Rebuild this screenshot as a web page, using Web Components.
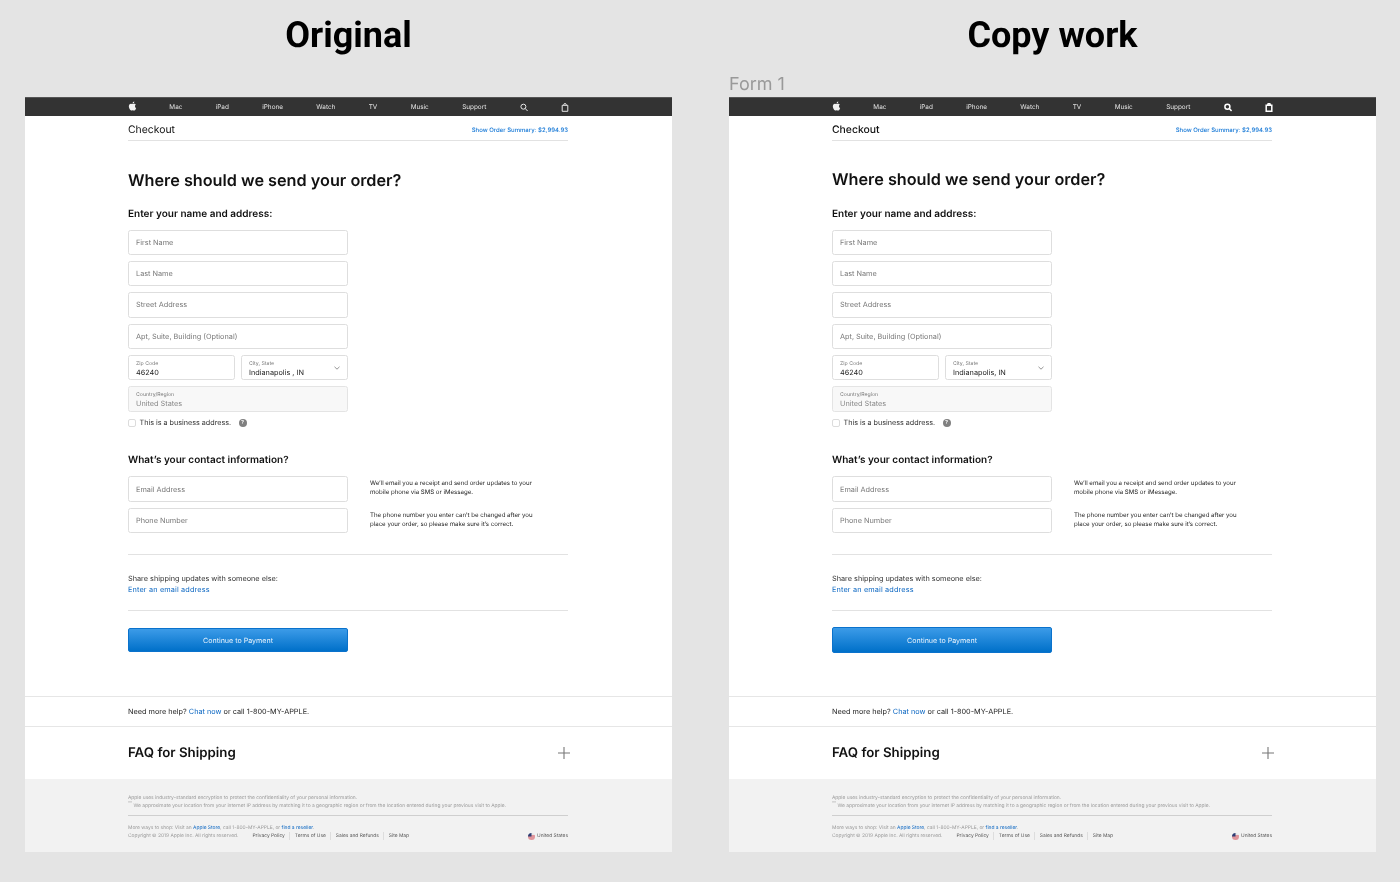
<!DOCTYPE html>
<html lang="en">
<head>
<meta charset="utf-8">
<title>Checkout comparison</title>
<style>
  html, body { margin: 0; height: 882px; overflow: hidden; background: #e4e4e4; }
  body { display: flex; gap: 57px; padding-left: 25px; font-family: Inter, "Liberation Sans", sans-serif; text-rendering: geometricPrecision; }
</style>
</head>
<body>

<frame-column heading="Original">
  <checkout-frame city="Indianapolis , IN"></checkout-frame>
</frame-column>

<frame-column heading="Copy work" label="Form 1">
  <checkout-frame city="Indianapolis, IN" copy></checkout-frame>
</frame-column>

<template id="frame-tpl">
  <style>
    :host { display: flex; flex-direction: column; width: 647px; height: 755px; background: #fff; color: #111; filter: blur(.25px); }
    .main { padding: 0 104px 0 103px; display: flex; flex-direction: column; }
    .top { padding-top: 1px; box-sizing: border-box; border-bottom: 1px solid #e2e2e2; height: 25px;
      display: flex; justify-content: space-between; align-items: center; }
    .checkout { font-size: 10.4px; padding-top: 1px; }
    :host([copy]) .checkout { font-weight: 500; }
    .summary { font-size: 6px; color: #1477d6; font-weight: 500; padding-top: 4px; }
    h1 { font-size: 16.24px; line-height: 28px; font-weight: 600; margin: 25px 0 0; }
    :host([copy]) h1 { margin-top: 24px; margin-bottom: 1px; }
    h2 { font-size: 10px; line-height: 15px; font-weight: 600; margin: 13px 0 0; }
    h2.contact { margin-top: 25px; }
    .fields { display: grid; grid-template-columns: 107px 107px; gap: 6px; width: 220px; margin-top: 7.5px; }
    .fields text-field.wide { grid-column: span 2; }
    .biz { display: flex; align-items: center; height: 10px; margin-top: 6px; font-size: 7.2px; color: #333; }
    .box { width: 8px; height: 8px; border: 1px solid #dcdcdc; border-radius: 2px; box-sizing: border-box; margin-right: 3.5px; background: #fff; }
    .tip { width: 8px; height: 8px; border-radius: 50%; background: #808080; color: #fff; font-size: 5.5px; font-weight: 700;
      display: flex; align-items: center; justify-content: center; margin-left: 7.5px; }
    .contact-grid { display: grid; grid-template-columns: 220px 1fr; column-gap: 22px; row-gap: 6px; margin-top: 8.5px; }
    .note { font-size: 6.1px; line-height: 9px; color: #222; padding-top: 3px; }
    .rule { height: 1px; background: #e2e2e2; }
    .share { font-size: 7.3px; line-height: 11px; color: #333; margin-top: 18px; }
    a { color: #0a66c2; text-decoration: none; }
    .share a { display: block; letter-spacing: .15px; }
    .pay { height: 24px; width: 220px; margin-top: 17px; border-radius: 2px; border: 1px solid #0a72cc; box-sizing: border-box;
      background: linear-gradient(#3c9be8, #0070c9); color: #e8f3fd; font-size: 7.1px; display: flex; align-items: center; justify-content: center; }
    :host([copy]) .pay { height: 26px; margin-top: 16px; }
    .help { margin-top: 44px; height: 31px; border-top: 1px solid #e6e6e6; border-bottom: 1px solid #e6e6e6; box-sizing: border-box;
      padding-left: 103px; display: flex; align-items: center; font-size: 7.3px; color: #222; }
    :host([copy]) .help { margin-top: 43px; }
    .faq { height: 52px; box-sizing: border-box; padding: 0 103px 1px; display: flex; align-items: center; justify-content: space-between; font-size: 13.3px; font-weight: 600; }
    .faq svg { width: 12px; height: 12px; margin-right: -1px; }
  </style>
  <site-nav></site-nav>
  <div class="main">
    <div class="top"><span class="checkout">Checkout</span><a class="summary">Show Order Summary: $2,994.93</a></div>
    <h1>Where should we send your order?</h1>
    <h2>Enter your name and address:</h2>
    <div class="fields">
      <text-field class="wide">First Name</text-field>
      <text-field class="wide">Last Name</text-field>
      <text-field class="wide">Street Address</text-field>
      <text-field class="wide">Apt, Suite, Building (Optional)</text-field>
      <text-field label="Zip Code" filled>46240</text-field>
      <text-field label="City, State" filled select id="city"></text-field>
      <text-field class="wide" label="Country/Region" disabled>United States</text-field>
    </div>
    <div class="biz"><span class="box"></span>This is a business address.<span class="tip">?</span></div>
    <h2 class="contact">What’s your contact information?</h2>
    <div class="contact-grid">
      <text-field>Email Address</text-field>
      <div class="note">We’ll email you a receipt and send order updates to your<br>mobile phone via SMS or iMessage.</div>
      <text-field>Phone Number</text-field>
      <div class="note">The phone number you enter can’t be changed after you<br>place your order, so please make sure it’s correct.</div>
    </div>
    <div class="rule" style="margin-top:21px"></div>
    <div class="share">Share shipping updates with someone else:<a>Enter an email address</a></div>
    <div class="rule" style="margin-top:15px"></div>
    <div class="pay">Continue to Payment</div>
  </div>
  <div class="help"><span>Need more help? <a>Chat now</a> or call 1-800-MY-APPLE.</span></div>
  <div class="faq"><span>FAQ for Shipping</span>
    <svg viewBox="0 0 12 12"><path d="M6 0v12M0 6h12" stroke="#777" stroke-width="1.1" fill="none"/></svg>
  </div>
  <site-footer></site-footer>
</template>

<script>
  class FrameColumn extends HTMLElement {
    constructor() {
      super()
      const shadow = this.attachShadow({ mode: 'open' })
      shadow.innerHTML = `
      <style>
        :host { display: flex; flex-direction: column; width: 647px; padding-top: 13px; }
        h3 { margin: 0; height: 44px; font: 700 36px/44px Roboto, sans-serif; color: #000; text-align: center; filter: blur(.2px); }
        .label { height: 40px; display: flex; align-items: flex-end; box-sizing: border-box; padding-bottom: 1px;
          font: 400 18px/22px Inter, sans-serif; color: #999; filter: blur(.2px); }
      </style>
      <h3>${this.getAttribute('heading')}</h3>
      <div class="label">${this.getAttribute('label') || ''}</div>
      <slot></slot>`
    }
  }

  class CheckoutFrame extends HTMLElement {
    constructor() {
      super()
      const shadow = this.attachShadow({ mode: 'open' })
      shadow.appendChild(document.getElementById('frame-tpl').content.cloneNode(true))
      shadow.getElementById('city').textContent = this.getAttribute('city')
      if (this.hasAttribute('copy')) {
        shadow.querySelector('site-nav').setAttribute('copy', '')
      }
    }
  }

  class SiteNav extends HTMLElement {
    constructor() {
      super()
      const shadow = this.attachShadow({ mode: 'open' })
      shadow.innerHTML = `
      <style>
        :host { display: block; height: 19px; background: #333; border-top: 1px solid #555; box-sizing: border-box;
          padding: 0 103px; }
        nav { height: 100%; display: flex; justify-content: space-between; align-items: center;
          font: 6.4px Inter, sans-serif; color: #e4e4e4; }
        svg { display: block; width: 8px; height: 9px; fill: #f2f2f2; }
        svg.apple { width: 9px; height: 10px; margin: -2px -1px 0 0; }
        .line { fill: none; stroke: #e8e8e8; stroke-width: 1; }
        :host([copy]) .line { stroke: #fff; stroke-width: 1.5; }
      </style>
      <nav>
        <svg class="apple" viewBox="0 0 24 24"><path d="M12.152 6.896c-.948 0-2.415-1.078-3.96-1.04-2.04.027-3.91 1.183-4.961 3.014-2.117 3.675-.546 9.103 1.519 12.09 1.013 1.454 2.208 3.09 3.792 3.039 1.52-.065 2.09-.987 3.935-.987 1.831 0 2.35.987 3.96.948 1.637-.026 2.676-1.48 3.676-2.948 1.156-1.688 1.636-3.325 1.662-3.415-.039-.013-3.182-1.221-3.22-4.857-.026-3.04 2.48-4.494 2.597-4.559-1.429-2.09-3.623-2.324-4.39-2.376-2-.156-3.675 1.09-4.61 1.09zM15.53 3.83c.843-1.012 1.4-2.427 1.245-3.83-1.207.052-2.662.805-3.532 1.818-.78.896-1.454 2.338-1.273 3.714 1.338.104 2.715-.688 3.559-1.701"/></svg>
        <span>Mac</span><span>iPad</span><span>iPhone</span><span>Watch</span><span>TV</span><span>Music</span><span>Support</span>
        <svg viewBox="0 0 8 9"><circle class="line" cx="3.4" cy="3.7" r="2.5"/><path class="line" d="M5.2 5.5 7.6 8"/></svg>
        <svg viewBox="0 0 8 9"><path class="line" d="M1.2 2.3h5.6v6H1.2zM2.8 2.3V1.4q0-.8 1.2-.8t1.2.8v.9"/></svg>
      </nav>`
    }
  }

  class TextField extends HTMLElement {
    constructor() {
      super()
      const shadow = this.attachShadow({ mode: 'open' })
      const label = this.getAttribute('label')
      shadow.innerHTML = `
      <style>
        :host { display: flex; flex-direction: column; justify-content: center; position: relative; height: 25.4px; box-sizing: border-box;
          border: 1px solid #dedede; border-radius: 2.5px; padding: 1px 7px 0; background: #fff;
          font-size: 7.3px; color: #777; }
        :host([label]) { padding-top: 3px; }
        :host([filled]) { color: #222; }
        :host([disabled]) { background: #f8f8f8; color: #888; border-color: #e4e4e4; }
        .label { font-size: 5.2px; line-height: 7px; color: #777; }
        .value { line-height: 10px; }
        svg { position: absolute; right: 7px; top: 10px; width: 6px; height: 4px; }
      </style>
      ${label ? `<div class="label">${label}</div>` : ''}
      <div class="value"><slot></slot></div>
      ${this.hasAttribute('select') ? '<svg viewBox="0 0 6 4"><path d="M.5 .8 3 3.2 5.5 .8" fill="none" stroke="#666" stroke-width=".7"/></svg>' : ''}`
    }
  }

  class SiteFooter extends HTMLElement {
    constructor() {
      super()
      const shadow = this.attachShadow({ mode: 'open' })
      shadow.innerHTML = `
      <style>
        :host { display: block; flex: 1; background: #f2f2f2; padding: 15px 104px 0 103px; font-size: 4.9px; line-height: 8px; color: #999; }
        .rule { height: 1px; background: #cfcfcf; margin: 5px 0 8px; }
        a { color: #0a66c2; }
        .row { display: flex; align-items: center; height: 8px; }
        .links { margin-left: 14px; color: #555; display: flex; }
        .links span { padding: 0 4.5px; border-right: 1px solid #ddd; }
        .links span:first-child { padding-left: 0; }
        .links span:last-child { border: 0; }
        .flag { margin-left: auto; color: #555; display: flex; align-items: center; gap: 2px; }
        svg { width: 7px; height: 7px; }
        sup { font-size: 4px; line-height: 0; }
      </style>
      <div>Apple uses industry-standard encryption to protect the confidentiality of your personal information.</div>
      <div><sup>**</sup> We approximate your location from your internet IP address by matching it to a geographic region or from the location entered during your previous visit to Apple.</div>
      <div class="rule"></div>
      <div>More ways to shop: Visit an <a>Apple Store</a>, call 1-800-MY-APPLE, or <a>find a reseller</a>.</div>
      <div class="row">
        <span>Copyright © 2019 Apple Inc. All rights reserved.</span>
        <span class="links"><span>Privacy Policy</span><span>Terms of Use</span><span>Sales and Refunds</span><span>Site Map</span></span>
        <span class="flag">
          <svg viewBox="0 0 14 14"><clipPath id="c"><circle cx="7" cy="7" r="7"/></clipPath><g clip-path="url(#c)"><rect width="14" height="14" fill="#e8e8e8"/><path d="M0 5h14v2H0zM0 9h14v2H0zM0 13h14v1H0z" fill="#d8434e"/><rect width="7" height="7" fill="#2f3f75"/></g></svg>
          United States
        </span>
      </div>`
    }
  }

  customElements.define('frame-column', FrameColumn)
  customElements.define('site-nav', SiteNav)
  customElements.define('text-field', TextField)
  customElements.define('site-footer', SiteFooter)
  customElements.define('checkout-frame', CheckoutFrame)
</script>
</body>
</html>
